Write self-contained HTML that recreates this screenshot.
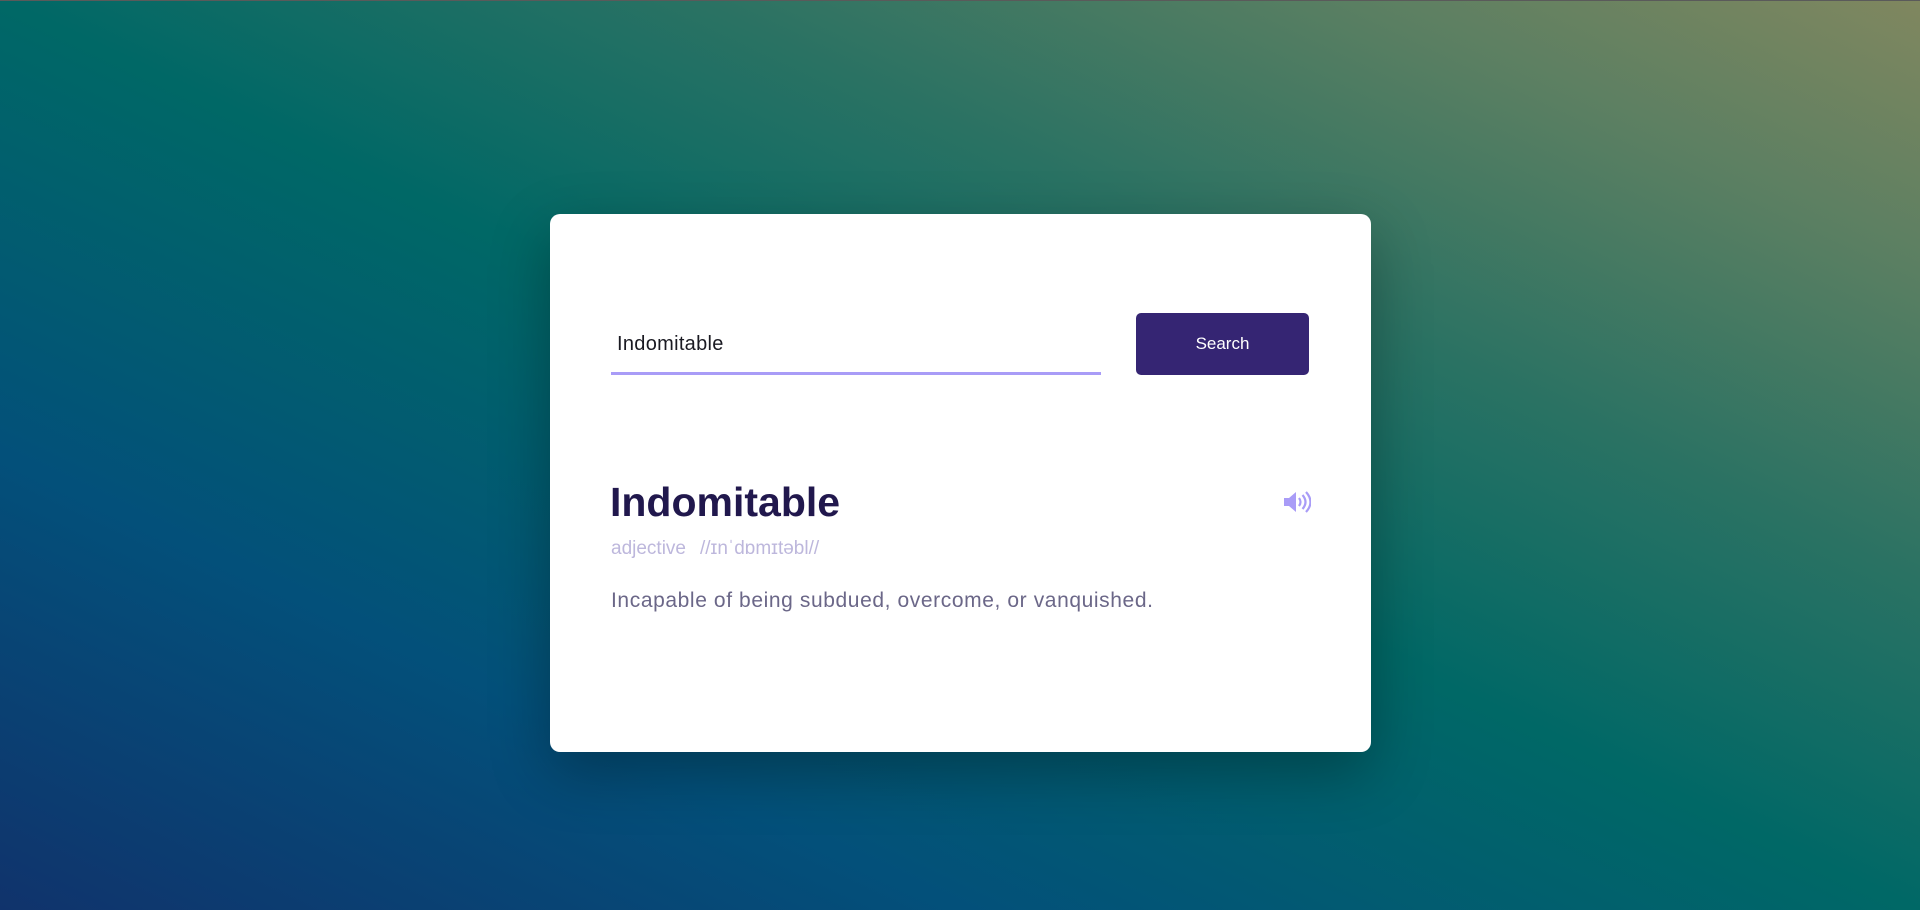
<!DOCTYPE html>
<html><head><meta charset="utf-8"><style>
html,body{margin:0;padding:0;width:1920px;height:910px;overflow:hidden;}
body{background:linear-gradient(to top right,#10336c 0%,#03507a 25%,#006866 50%,#2a7263 68%,#5a7f62 85%,#80875f 100%);font-family:"Liberation Sans",sans-serif;position:relative;}
.top{position:absolute;left:0;top:0;width:1920px;height:1px;background:#5a5a5a;}
.card{position:absolute;left:550px;top:214px;width:821px;height:538px;background:#fff;border-radius:10px;box-shadow:0 20px 60px rgba(0,0,0,0.3);}
.inp{position:absolute;left:61px;top:110px;width:490px;height:48px;border-bottom:3px solid #a99cf7;}
.inp span{position:absolute;left:6px;top:9px;font-size:20px;color:#1a1a22;letter-spacing:0.3px;}
.btn{position:absolute;left:586px;top:99px;width:173px;height:62px;background:#352573;border-radius:5px;color:#fff;font-size:17px;text-align:center;line-height:62px;}
h1{position:absolute;left:60px;top:265px;margin:0;font-size:41px;font-weight:bold;color:#21184d;letter-spacing:0px;}
.meta{position:absolute;left:61px;top:324px;font-size:19px;color:#bdb7dc;}
.meta b{font-weight:normal;margin-left:14px;}
.def{position:absolute;left:61px;top:375px;font-size:21px;color:#6b6788;letter-spacing:0.6px;}
svg{position:absolute;left:733px;top:276px;}
</style></head><body>
<div class="top"></div>
<div class="card">
<div class="inp"><span>Indomitable</span></div>
<div class="btn">Search</div>
<h1>Indomitable</h1>
<svg width="28" height="24" viewBox="0 0 28 24"><path d="M1 8h5l7-6v20l-7-6H1z" fill="#a99cf7"/><path d="M16 8q3 4 0 8" stroke="#a99cf7" stroke-width="2.2" fill="none"/><path d="M19.5 5q6 7 0 14" stroke="#a99cf7" stroke-width="2.2" fill="none"/><path d="M23 2q9 10 0 20" stroke="#a99cf7" stroke-width="2.2" fill="none"/></svg>
<div class="meta">adjective<b>//ɪnˈdɒmɪtəbl//</b></div>
<div class="def">Incapable of being subdued, overcome, or vanquished.</div>
</div>
</body></html>
